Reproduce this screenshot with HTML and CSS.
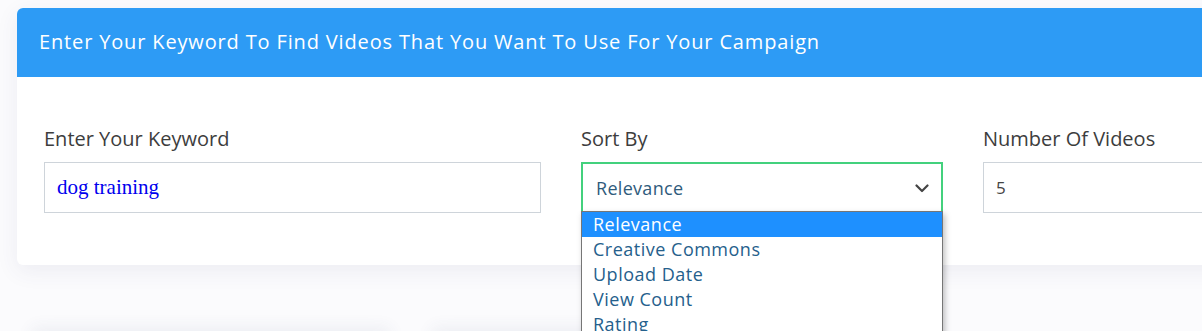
FILE: index.html
```html
<!DOCTYPE html>
<html>
<head>
<meta charset="utf-8">
<link rel="stylesheet" href="styles.css">
</head>
<body>
<div class="page">
  <div class="card">
    <div class="card-header">Enter Your Keyword To Find Videos That You Want To Use For Your Campaign</div>
    <div class="card-body">
      <div class="field">
        <label class="label">Enter Your Keyword</label>
        <div class="input keyword">dog training</div>
      </div>
      <div class="field">
        <label class="label">Sort By</label>
        <div class="select-wrap">
          <div class="input select">
            <span>Relevance</span>
            <svg class="chev" width="14" height="9" viewBox="0 0 14 9"><path d="M1.5 1.5 L7 7 L12.5 1.5" fill="none" stroke="#444" stroke-width="2.2" stroke-linecap="round" stroke-linejoin="round"/></svg>
          </div>
          <ul class="menu">
            <li class="opt active">Relevance</li>
            <li class="opt">Creative Commons</li>
            <li class="opt">Upload Date</li>
            <li class="opt">View Count</li>
            <li class="opt">Rating</li>
          </ul>
        </div>
      </div>
      <div class="field">
        <label class="label">Number Of Videos</label>
        <div class="input number">5</div>
      </div>
    </div>
  </div>
  <div class="below">
    <div class="ghost g1"></div>
    <div class="ghost g2"></div>
  </div>
</div>
</body>
</html>
```

FILE: styles.css
```css
html, body {
  margin: 0;
  padding: 0;
  background: #fbfbfd;
  overflow: hidden;
}
.page {
  padding: 8px 0 0 17px;
  width: 1300px;
}
.card {
  width: 1260px;
  background: #fff;
  border-radius: 6px;
  box-shadow: 0 6px 22px rgba(60, 70, 110, 0.08);
}
.card-header {
  height: 69px;
  box-sizing: border-box;
  background: #2d9bf5;
  border-radius: 6px 6px 0 0;
  color: #fff;
  font-family: "Open Sans", "Lato", sans-serif;
  font-size: 20px;
  padding: 20px 0 0 22px;
  letter-spacing: 0.85px;
}
.card-body {
  display: grid;
  grid-template-columns: 497px 362px 300px;
  column-gap: 40px;
  padding: 48px 0 52px 27px;
}
.label {
  display: block;
  font-family: "Open Sans", "Lato", sans-serif;
  font-size: 20px;
  color: #3d3d3d;
  height: 37px;
  line-height: 28px;
}
.input {
  height: 51px;
  box-sizing: border-box;
  border: 1px solid #ced4da;
  background: #fff;
  display: flex;
  align-items: center;
}
.keyword {
  font-family: "Liberation Serif", serif;
  font-size: 21px;
  color: #0000ee;
  padding-left: 12px;
}
.number {
  font-family: "Open Sans", sans-serif;
  font-size: 17px;
  color: #444;
  padding-left: 12px;
}
.select-wrap {
  position: relative;
}
.select {
  border: 2px solid #43d17d;
  justify-content: space-between;
  padding: 0 12px 0 13px;
  font-family: "Open Sans", sans-serif;
  font-size: 18px;
  letter-spacing: 0.3px;
  color: #2f5b7c;
}
.chev {
  margin-top: 2px;
}
.menu {
  position: absolute;
  left: 0;
  top: 49px;
  width: 362px;
  box-sizing: border-box;
  margin: 0;
  padding: 0;
  list-style: none;
  background: #fff;
  border: 1px solid #767676;
  box-shadow: 2px 3px 6px rgba(0, 0, 0, 0.25);
  z-index: 5;
}
.opt {
  height: 25px;
  line-height: 25px;
  padding-left: 11px;
  font-family: "Open Sans", sans-serif;
  font-size: 18px;
  letter-spacing: 0.5px;
  color: #25608c;
}
.opt.active {
  background: #1e90ff;
  color: #fff;
}
.below {
  display: flex;
  gap: 40px;
  padding: 68px 0 0 14px;
}
.ghost {
  height: 40px;
  background: #fff;
  border-radius: 6px;
  box-shadow: 0 -6px 16px rgba(60, 70, 110, 0.07);
}
.g1 { width: 360px; }
.g2 { width: 500px; }
```
